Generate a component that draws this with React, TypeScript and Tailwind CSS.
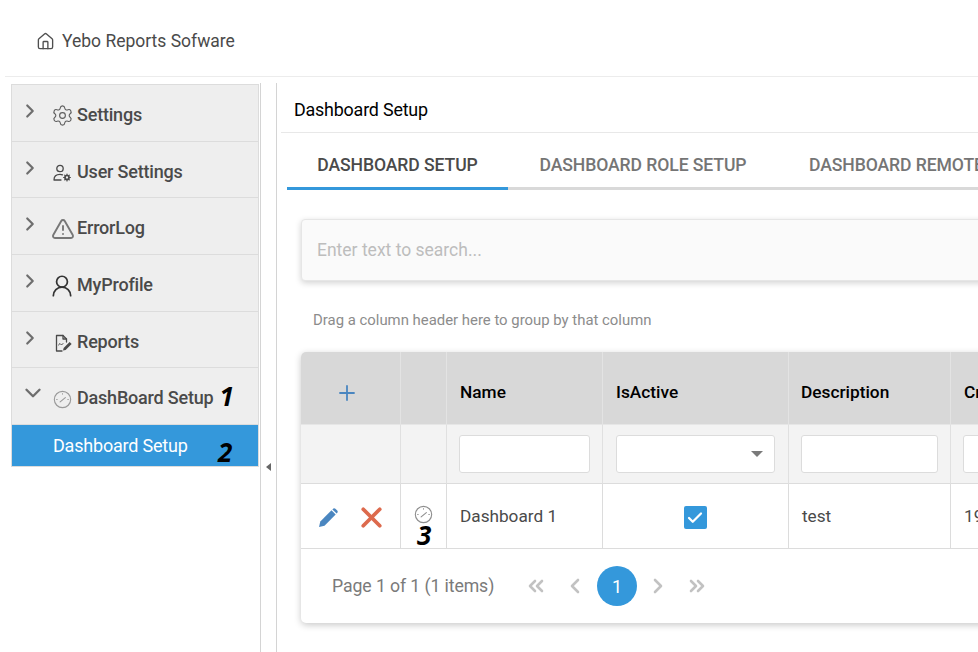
import { Check, ChevronDown, ChevronLeft, ChevronRight, ChevronsLeft, ChevronsRight, House, Plus, Settings, TriangleAlert, UserRound, X } from "lucide-react";
import type { ReactNode } from "react";

function GaugeIcon({ className }: { className?: string }) {
  return (
    <svg className={className} viewBox="0 0 20 20" fill="none" stroke="currentColor" strokeWidth="1.2" strokeLinecap="round">
      <circle cx="10" cy="10" r="8.6" />
      <path d="M7.500 12.500 13 8" />
      <path d="M10 3.600v1M3.600 10h1M16.400 10h-1" strokeWidth="0.8" />
    </svg>
  );
}

function UserGearIcon() {
  return (
    <svg className="h-[20px] w-[20px] text-[#4a4a4a]" viewBox="0 0 20 20" fill="none" stroke="currentColor" strokeWidth="1.3" strokeLinecap="round">
      <circle cx="8" cy="5.500" r="3.200" />
      <path d="M2 17c0-3.600 2.400-5.600 6-5.600 1 0 1.800.1 2.500.4M2 17h7" />
      <circle cx="15" cy="14.500" r="2" strokeWidth="1.700" />
      <path d="M15 11v1M15 17v1M11.600 14.500h1M17.400 14.500h1M12.700 12.200l.6.6M16.700 16.200l.6.6M12.700 16.800l.6-.6M16.700 12.800l.6-.6" strokeWidth="1.200" />
    </svg>
  );
}

function ReportIcon() {
  return (
    <svg className="ml-[1px] h-[20px] w-[20px] text-[#4a4a4a]" viewBox="0 0 20 20" fill="none" stroke="currentColor" strokeWidth="1.3" strokeLinecap="round" strokeLinejoin="round">
      <path d="M9 18H3.500V2.500H10l3.500 3.500v3" />
      <path d="M10 2.500V6h3.500" />
      <path d="M5.500 12l1.500-1.500 1.500 1.500 1.500-1.500" strokeWidth="1" />
      <path d="M10 17.500l.6-2.500 6-6 2 2-6 6z" fill="currentColor" stroke="none" />
    </svg>
  );
}

function PencilIcon() {
  return (
    <svg className="h-[21px] w-[21px] text-[#4a86c0]" viewBox="0 0 21 21" fill="currentColor">
      <path d="M1 20l1.300-5.500L13.500 3.300l4.200 4.200L6.500 18.700z" />
      <path d="M15 1.800c.7-.7 1.700-.7 2.400 0l1.800 1.800c.7.700.7 1.700 0 2.400l-.6.6-4.200-4.200z" />
    </svg>
  );
}

function MenuRow({ icon, label, open, badge }: { icon: ReactNode; label: string; open?: boolean; badge?: string }) {
  return (
    <div className="flex h-[56.7px] items-center border-b border-[#dcdcdc] pl-[11px] pt-[4px]">
      <span className="-mt-[4px] flex w-[29px] shrink-0 items-center text-[#6e6e6e]">
        {open ? (
          <ChevronDown className="-ml-[3px] -mt-[6px] h-[26px] w-[26px]" strokeWidth={2.2} />
        ) : (
          <ChevronRight className="-ml-[4px] -mt-[4px] h-[22px] w-[22px]" strokeWidth={2.4} />
        )}
      </span>
      <span className="flex w-[25px] shrink-0 items-center justify-start pt-[2px]">{icon}</span>
      <span className="text-[18px] leading-none font-medium tracking-[-0.2px] text-[#4a4a4a]">{label}</span>
      {badge && <span className="ml-[6px] -mt-[5px] font-['Open_Sans',sans-serif] text-[26px] leading-none font-bold text-black italic">{badge}</span>}
    </div>
  );
}

function PagerIcon({ children }: { children: ReactNode }) {
  return <span className="flex w-[39px] justify-center text-[#c2c2c2]">{children}</span>;
}

const headCell = "flex h-[72px] items-center border-r border-[#e3e3e3] bg-[#d8d8d8] px-[13px] pt-[10px] text-[17.3px] font-medium text-black";
const filterCell = "flex h-[60px] items-center border-r border-[#e0e0e0] border-t border-t-[#e6e6e6] border-b border-b-[#dcdcdc] bg-[#f3f3f3] px-[12px]";
const dataCell = "flex h-[65px] items-center border-r border-[#dcdcdc] border-b border-b-[#dcdcdc] pl-[13px] text-[17.2px] text-[#4a4a4a]";
const filterInput = "h-[38px] w-full rounded-[3px] border border-[#dcdcdc] bg-white";

export default function App() {
  return (
    <div className="h-[652px] w-[978px] overflow-hidden bg-white font-['Roboto',sans-serif]">
      <header className="ml-[5px] flex h-[77px] items-center border-b border-[#ececec] pl-[31px] pt-[7px]">
        <House className="h-[19px] w-[19px] text-[#4f4f4f]" strokeWidth={1.7} />
        <span className="ml-[7px] text-[17.5px] text-[#4a4a4a]">Yebo Reports Sofware</span>
      </header>

      <div className="flex h-[575px] pt-[6px]">
        <aside className="ml-[11px] w-[249px] shrink-0 pr-[1px]">
          <div className="mt-[1px] border border-[#dcdcdc] bg-[#eeeeee]">
            <MenuRow icon={<Settings className="-ml-[1px] h-[23px] w-[23px] text-[#5f5f5f]" strokeWidth={1.2} />} label="Settings" />
            <MenuRow icon={<UserGearIcon />} label="User Settings" />
            <MenuRow icon={<TriangleAlert className="-ml-[1px] h-[24px] w-[24px] text-[#777]" strokeWidth={1.9} />} label="ErrorLog" />
            <MenuRow icon={<UserRound className="-ml-[3px] h-[26px] w-[26px] text-[#333]" strokeWidth={1.6} />} label="MyProfile" />
            <MenuRow icon={<ReportIcon />} label="Reports" />
            <MenuRow icon={<GaugeIcon className="ml-[1px] h-[19px] w-[19px] text-[#9a9a9a]" />} label="DashBoard Setup" open badge="1" />
            <div className="relative flex h-[41px] items-center bg-[#3498db] pb-[1px] pl-[41px] text-[18px] tracking-[-0.2px] text-white">
              Dashboard Setup
              <span className="absolute left-[206px] top-[14px] font-['Open_Sans',sans-serif] text-[26px] leading-none font-bold text-black italic">2</span>
            </div>
          </div>
        </aside>

        <div className="flex w-[17px] shrink-0 border-x border-[#d4d4d4] pt-[380px] pl-[5px]">
          <span className="h-0 w-0 border-y-[4px] border-r-[5px] border-y-transparent border-r-[#666]" />
        </div>

        <main className="min-w-0 flex-1 overflow-hidden">
          <div className="w-[1000px]">
            <h1 className="ml-[4px] flex h-[50px] items-center border-b border-[#e8e8e8] pl-[13px] pt-[5px] text-[17.9px] leading-none tracking-[-0.2px] text-black">Dashboard Setup</h1>

            <nav className="ml-[10px] flex h-[57px] border-b-[3px] border-[#d9d9d9] text-[17.6px] font-medium tracking-[-0.1px]">
              <span className="-mb-[3px] flex w-[221px] items-center justify-center border-b-[3px] border-[#3498db] pt-[10px] text-[#4a4a4a]">DASHBOARD SETUP</span>
              <span className="flex w-[270px] items-center justify-center pt-[10px] text-[#757575]">DASHBOARD ROLE SETUP</span>
              <span className="flex items-center pl-[31px] pt-[10px] whitespace-nowrap text-[#757575]">DASHBOARD REMOTE SETUP</span>
            </nav>

            <div className="ml-[24px] mt-[29px] flex h-[62px] items-center rounded-[4px] border border-[#e6e6e6] bg-[#fafafa] pl-[15px] text-[17.5px] text-[#bdbdbd] shadow-[0_2px_6px_rgba(0,0,0,0.18)]">
              Enter text to search...
            </div>

            <p className="ml-[36px] mt-[31px] text-[14.9px] leading-[17px] text-[#8c8c8c]">Drag a column header here to group by that column</p>

            <section className="ml-[24px] mt-[23px] overflow-hidden rounded-[5px] shadow-[0_2px_7px_rgba(0,0,0,0.22)]">
              <div className="grid grid-cols-[100px_46px_156px_186px_162px_1fr]">
                <div className={`${headCell} justify-center`}>
                  <Plus className="ml-[-8px] h-[24px] w-[24px] text-[#4a86c0]" strokeWidth={1.8} />
                </div>
                <div className={headCell} />
                <div className={headCell}>Name</div>
                <div className={headCell}>IsActive</div>
                <div className={`${headCell} pl-[12px]`}>Description</div>
                <div className={headCell}>Created</div>

                <div className={filterCell} />
                <div className={filterCell} />
                <div className={filterCell}><div className={filterInput} /></div>
                <div className={`${filterCell} px-[13px]`}>
                  <div className={`${filterInput} flex items-center justify-end pr-[11px]`}>
                    <span className="h-0 w-0 border-x-[6px] border-t-[6px] border-x-transparent border-t-[#7a7a7a]" />
                  </div>
                </div>
                <div className={filterCell}><div className={filterInput} /></div>
                <div className={filterCell}><div className={filterInput} /></div>

                <div className={`${dataCell} gap-[16px] pl-[17px] pt-[3px]`}>
                  <PencilIcon />
                  <X className="h-[33px] w-[33px] text-[#dd6a4d]" strokeWidth={2.7} />
                </div>
                <div className={`${dataCell} relative items-start pl-[12px] pt-[21px]`}>
                  <GaugeIcon className="h-[19px] w-[19px] text-[#8f8f8f]" />
                  <span className="absolute left-[16px] top-[38px] font-['Open_Sans',sans-serif] text-[26px] leading-none font-bold text-black italic">3</span>
                </div>
                <div className={`${dataCell} pt-[2px]`}>Dashboard 1</div>
                <div className={`${dataCell} justify-center pl-0 pr-[14px] pt-[3px]`}>
                  <span className="flex h-[23px] w-[23px] items-center justify-center rounded-[2px] bg-[#3498db]">
                    <Check className="h-[18px] w-[18px] text-white" strokeWidth={3} />
                  </span>
                </div>
                <div className={`${dataCell} pl-[11px] pt-[2px]`}>test</div>
                <div className={`${dataCell} pt-[2px]`}>19</div>
              </div>

              <div className="flex h-[74px] items-center pl-[31px] text-[#7a7a7a]">
                <span className="w-[184px] text-[17.7px] tracking-[-0.1px]">Page 1 of 1 (1 items)</span>
                <PagerIcon><ChevronsLeft className="h-[24px] w-[24px]" strokeWidth={2.6} /></PagerIcon>
                <PagerIcon><ChevronLeft className="h-[24px] w-[24px]" strokeWidth={2.6} /></PagerIcon>
                <span className="ml-[3px] mr-[1px] flex h-[40px] w-[40px] items-center justify-center rounded-full bg-[#3498db] text-[18px] text-white">1</span>
                <PagerIcon><ChevronRight className="h-[24px] w-[24px]" strokeWidth={2.6} /></PagerIcon>
                <PagerIcon><ChevronsRight className="h-[24px] w-[24px]" strokeWidth={2.6} /></PagerIcon>
              </div>
            </section>
          </div>
        </main>
      </div>
    </div>
  );
}
